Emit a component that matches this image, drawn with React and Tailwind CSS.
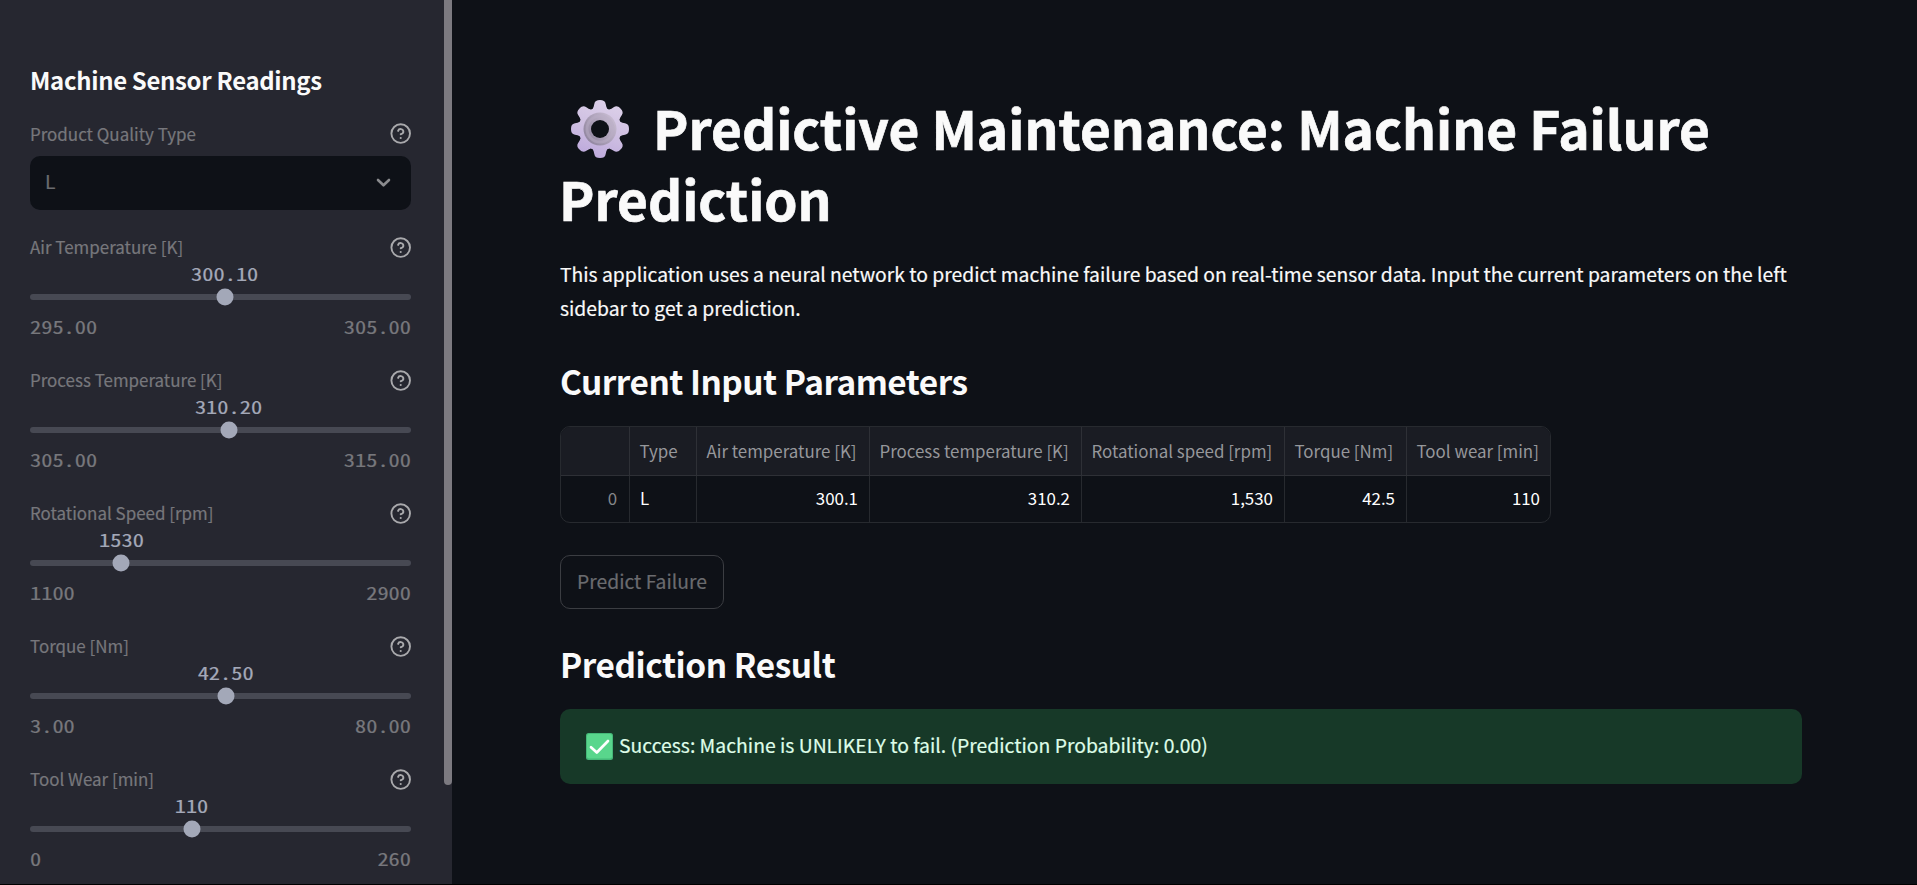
import React from "react";

const SLIDERS = [
  { label: "Air Temperature [K]", value: "300.10", min: "295.00", max: "305.00", pos: 51.1 },
  { label: "Process Temperature [K]", value: "310.20", min: "305.00", max: "315.00", pos: 52.1 },
  { label: "Rotational Speed [rpm]", value: "1530", min: "1100", max: "2900", pos: 24 },
  { label: "Torque [Nm]", value: "42.50", min: "3.00", max: "80.00", pos: 51.35 },
  { label: "Tool Wear [min]", value: "110", min: "0", max: "260", pos: 42.4 },
];

const COLUMNS = [
  { head: "Type", cell: "L", left: true },
  { head: "Air temperature [K]", cell: "300.1" },
  { head: "Process temperature [K]", cell: "310.2" },
  { head: "Rotational speed [rpm]", cell: "1,530" },
  { head: "Torque [Nm]", cell: "42.5" },
  { head: "Tool wear [min]", cell: "110" },
];

const GRID = "grid grid-cols-[69px_67px_173px_212px_203px_122px_143px]";

const MONO = "font-['Noto_Sans_Mono_CJK_SC','Liberation_Mono',monospace] text-[22.4px] leading-[28px] [-webkit-text-stroke:0.2px]";

function HelpIcon() {
  return (
    <svg className="size-[21px] shrink-0" viewBox="0 0 21 21" fill="none" stroke="#a9a9ac" strokeWidth="1.9" strokeLinecap="round" strokeLinejoin="round">
      <circle cx="10.7" cy="10.6" r="9.3" />
      <path d="M8.1 7.9a2.7 2.7 0 0 1 5.25.9c0 1.8-2.65 2.45-2.65 2.45" />
      <path d="M10.7 15h.01" strokeWidth="2.1" />
    </svg>
  );
}

function GearIcon() {
  return (
    <svg className="size-[60px] shrink-0" viewBox="-30 -30 60 60">
      <defs>
        <linearGradient id="gearBody" gradientUnits="userSpaceOnUse" x1="10" y1="-28" x2="-10" y2="28">
          <stop offset="0" stopColor="#dcd0e9" />
          <stop offset="0.5" stopColor="#cfc0e2" />
          <stop offset="1" stopColor="#bda9dc" />
        </linearGradient>
        <linearGradient id="gearRing" x1="0.9" y1="0.1" x2="0.1" y2="0.7">
          <stop offset="0" stopColor="#c9bdd3" />
          <stop offset="1" stopColor="#958aa3" />
        </linearGradient>
        <path id="gearTooth" d="M-9.5 -18C-7 -19.5 -6.2 -22 -5.7 -25C-5.2 -28 -3.3 -29 0 -29C3.3 -29 5.2 -28 5.7 -25C6.2 -22 7 -19.5 9.5 -18Z" />
        <clipPath id="gearShape">
          <circle r="21.5" />
          {[0, 45, 90, 135, 180, 225, 270, 315].map((a) => (
            <use key={a} href="#gearTooth" transform={`rotate(${a})`} />
          ))}
        </clipPath>
      </defs>
      <rect x="-30" y="-30" width="60" height="60" fill="url(#gearBody)" clipPath="url(#gearShape)" />
      <circle r="16.5" fill="url(#gearRing)" />
      <circle r="13" fill="none" stroke="#b9aec5" strokeWidth="3" opacity="0.5" />
      <circle r="9" fill="#0e1117" />
    </svg>
  );
}

function CheckEmoji() {
  return (
    <svg className="size-[27px] shrink-0" viewBox="0 0 27 27">
      <rect width="27" height="27" rx="2.5" fill="#45b878" />
      <rect x="1" y="1" width="25" height="24.5" rx="2" fill="#59d68c" />
      <path d="M5 14.2l5.8 5.3L22 8" fill="none" stroke="#fff" strokeWidth="2.7" strokeLinecap="round" strokeLinejoin="round" />
    </svg>
  );
}

function Slider({ label, value, min, max, pos }) {
  return (
    <div className="h-[132.9px] w-full">
      <div className="flex h-[25px] items-center justify-between">
        <span className="pb-[2px] text-[16.95px] leading-[25px] text-[#77777c] [-webkit-text-stroke:0.2px]">{label}</span>
        <HelpIcon />
      </div>
      <div className="relative mt-[34px] h-[6px] rounded-full bg-[#474953]">
        <div className="absolute top-1/2 size-[17px] -translate-x-1/2 -translate-y-1/2 rounded-full bg-[#a3a8b8]" style={{ left: `${pos}%` }} />
        <div className={`${MONO} absolute -top-[35px] -translate-x-1/2 scale-y-[0.8] text-[#a3a8b8]`} style={{ left: `${pos}%` }}>{value}</div>
      </div>
      <div className={`${MONO} mt-[12px] flex scale-y-[0.8] justify-between text-[#77777c]`}>
        <span>{min}</span>
        <span>{max}</span>
      </div>
    </div>
  );
}

export default function App() {
  return (
    <div className="flex h-[885px] w-[1917px] overflow-hidden border-b border-black bg-[#0e1117] font-['Noto_Sans_CJK_SC','Source_Sans_Pro',sans-serif] text-[#fafafa]">
      <aside className="flex w-[452px] shrink-0 justify-between bg-[#262730] pl-[30px]">
        <div className="w-[381px] pt-[62px]">
          <h2 className="text-[23.9px] font-bold leading-[36px] tracking-[-0.3px]">Machine Sensor Readings</h2>
          <div className="mt-[23px] flex h-[25px] items-center justify-between">
            <span className="text-[16.95px] leading-[25px] text-[#77777c] [-webkit-text-stroke:0.2px]">Product Quality Type</span>
            <HelpIcon />
          </div>
          <div className="mt-[10px] flex h-[54px] items-center justify-between rounded-[10px] bg-[#0e1117] pl-[15px] pr-[20px]">
            <span className="pb-[4px] text-[19.3px] leading-[28px] text-[#6b6c70] [-webkit-text-stroke:0.2px]">L</span>
            <svg className="h-[10px] w-[15px]" viewBox="0 0 15 10" fill="none" stroke="#8a8b8e" strokeWidth="2.6" strokeLinecap="round" strokeLinejoin="round">
              <path d="M2 2l5.5 5.3L13 2" />
            </svg>
          </div>
          <div className="mt-[25px]">
            {SLIDERS.map((s) => (
              <Slider key={s.label} {...s} />
            ))}
          </div>
        </div>
        <div className="h-[785px] w-[8px] rounded-b-full bg-[#7c7a80]" />
      </aside>
      <main className="ml-[108px] w-[1242px] pt-[91px]">
        <h1 className="text-[53.2px] font-bold leading-[71px] [-webkit-text-stroke:0.7px]">
          <span className="flex h-[71px] items-center">
            <span className="ml-[10px] mr-[23px] flex pt-[4px]"><GearIcon /></span>
            <span className="whitespace-nowrap">Predictive Maintenance: Machine Failure</span>
          </span>
          <span className="block h-[71px] -indent-px">Prediction</span>
        </h1>
        <p className="mt-[24px] whitespace-nowrap text-[19.32px] leading-[34px] [-webkit-text-stroke:0.2px]">
          This application uses a neural network to predict machine failure based on real-time sensor data. Input the current parameters on the left
          <br />
          sidebar to get a prediction.
        </p>
        <h2 className="mt-[33px] text-[33.4px] font-bold leading-[45px] tracking-[-0.5px]">Current Input Parameters</h2>
        <div className="mt-[23px] w-[991px] overflow-hidden rounded-[10px] border border-[#272a2f]">
          <div className={`${GRID} h-[49px] border-b border-[#2e3036] bg-[#1a1c23] text-[16.9px] leading-[48px] text-[#96979b]`}>
            <div className="border-r border-[#2e3036]" />
            {COLUMNS.map((c) => (
              <div key={c.head} className="whitespace-nowrap border-r border-[#2e3036] pl-[9.5px] last:border-r-0">{c.head}</div>
            ))}
          </div>
          <div className={`${GRID} h-[46px] text-[16.9px] leading-[43px] text-white`}>
            <div className="border-r border-[#272a2f] pr-[12px] text-right text-[#85868a]">0</div>
            {COLUMNS.map((c) => (
              <div key={c.head} className={c.left ? "border-r border-[#272a2f] pl-[10px]" : "border-r border-[#272a2f] pr-[11px] text-right last:border-r-0 last:pr-[10px]"}>{c.cell}</div>
            ))}
          </div>
        </div>
        <button className="mt-[32px] block h-[54px] w-[164px] whitespace-nowrap rounded-[10px] border border-[#3b3d42] text-[19.3px] leading-[50px] text-[#6a6b6f] [-webkit-text-stroke:0.2px]"><span className="block h-[52px]">Predict Failure</span></button>
        <h2 className="mt-[32px] text-[33.4px] font-bold leading-[45px] tracking-[-0.45px]">Prediction Result</h2>
        <div className="mt-[23px] flex h-[75px] items-center gap-[6px] rounded-[10px] bg-[#173928] pl-[26px] text-[19.35px] text-[#dffde9]">
          <CheckEmoji />
          <span className="pb-[3px] leading-[34px] [-webkit-text-stroke:0.2px]">Success: Machine is UNLIKELY to fail. (Prediction Probability: 0.00)</span>
        </div>
      </main>
    </div>
  );
}
